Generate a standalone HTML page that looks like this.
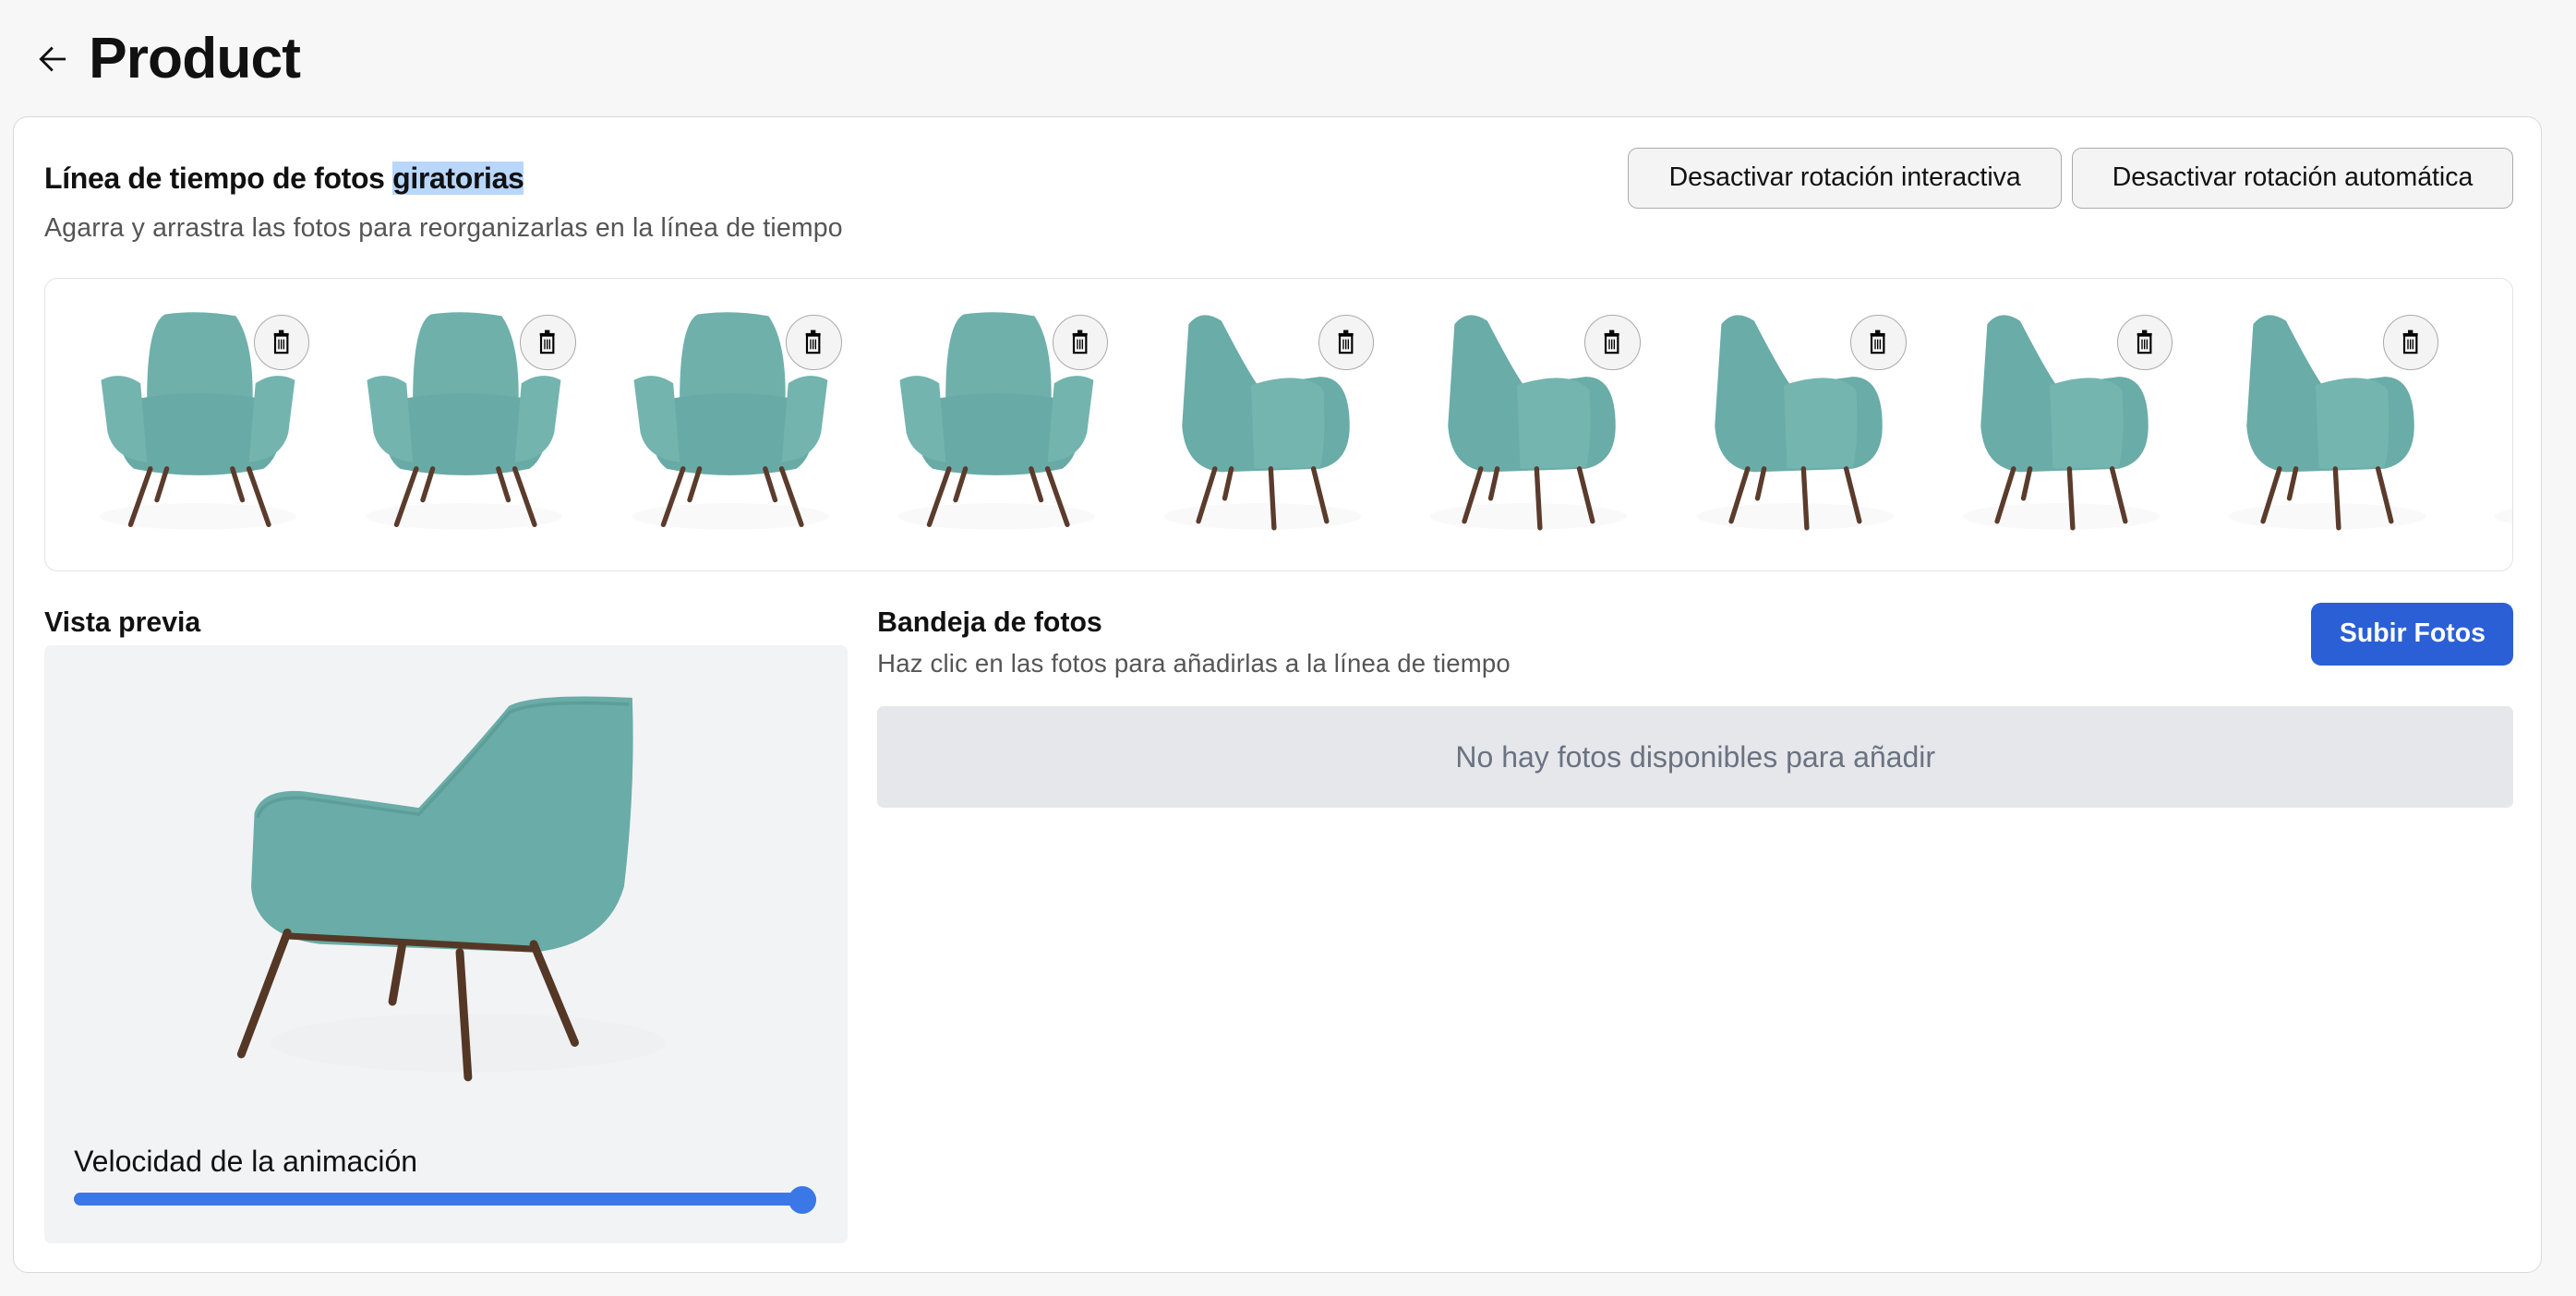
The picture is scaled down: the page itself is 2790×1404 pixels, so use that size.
<!DOCTYPE html>
<html><head><meta charset="utf-8"><style>
html,body{margin:0;padding:0}
body{width:1568px;height:789px;overflow:hidden;background:#f7f7f7;font-family:"Liberation Sans",Arial,sans-serif;color:#111;zoom:1.7793;position:relative}
.abs{position:absolute}
.card{left:8px;top:71px;width:1539px;height:704px;background:#fff;border:1px solid #d9d9d9;border-radius:9px;box-sizing:border-box}
.btn{top:90px;height:37px;background:#f4f4f4;border:1px solid #aaa;border-radius:6px;box-sizing:border-box;font-size:16px;line-height:35px;text-align:center;color:#111}
.tl{left:27px;top:169px;width:1503px;height:179px;border:1px solid #e3e3e3;border-radius:8px;box-sizing:border-box;overflow:hidden;background:#fff}
.del{width:34px;height:34px;border-radius:50%;background:#f4f4f4;border:1px solid #aaa;box-sizing:border-box}
</style></head><body>
<svg width="0" height="0" style="position:absolute">
<defs>
<symbol id="front" viewBox="0 0 130 135">
<ellipse cx="65" cy="125" rx="60" ry="8" fill="#f9f9f9"/>
<path d="M34 62 Q33 8 45 2 Q65 -1 88 3 Q100 20 98 62 Z" fill="#6fb0ab"/>
<path d="M20 55 Q65 45 112 55 Q120 85 105 96 Q65 104 26 96 Q12 85 20 55Z" fill="#68aaa5"/>
<path d="M6 42 Q18 36 30 44 L34 92 Q14 90 10 74 Z" fill="#73b4af"/>
<path d="M124 42 Q112 36 100 44 L96 92 Q116 90 120 74 Z" fill="#73b4af"/>
<g stroke="#5a3b2c" stroke-width="3" stroke-linecap="round"><line x1="36" y1="96" x2="24" y2="130"/><line x1="96" y1="96" x2="108" y2="130"/><line x1="46" y1="96" x2="40" y2="115"/><line x1="86" y1="96" x2="92" y2="115"/></g>
</symbol>
<symbol id="side" viewBox="0 0 130 135">
<ellipse cx="65" cy="125" rx="60" ry="8" fill="#f9f9f9"/>
<path d="M20 8 Q28 -2 40 6 Q55 35 62 45 L100 40 Q118 40 118 70 Q118 92 100 96 L40 98 Q18 96 16 70 Z" fill="#6aaca7"/>
<path d="M58 45 Q90 35 102 48 Q104 80 100 95 L60 96 Z" fill="#74b5b0"/>
<g stroke="#5a3b2c" stroke-width="3" stroke-linecap="round"><line x1="36" y1="96" x2="26" y2="128"/><line x1="96" y1="96" x2="104" y2="128"/><line x1="46" y1="96" x2="42" y2="114"/><line x1="70" y1="96" x2="72" y2="132"/></g>
</symbol>
<symbol id="trash" viewBox="0 0 16 20">
<rect x="6" y="0.5" width="4" height="2.5" fill="#000"/><rect x="2" y="3" width="12" height="2" fill="#000"/>
<path d="M3 5 H13 V19 H3 Z" fill="none" stroke="#000" stroke-width="1.6"/>
<g stroke="#000" stroke-width="1"><line x1="6" y1="8" x2="6" y2="16"/><line x1="8" y1="8" x2="8" y2="16"/><line x1="10" y1="8" x2="10" y2="16"/></g>
</symbol>
</defs></svg>

<svg class="abs" style="left:22px;top:27px" width="20" height="18" viewBox="0 0 20 18"><path d="M18 9 H3 M10 2 L3 9 L10 16" fill="none" stroke="#111" stroke-width="1.6"/></svg>
<div class="abs" style="left:54px;top:16px;font-size:35px;font-weight:bold;letter-spacing:-0.5px">Product</div>

<div class="abs card"></div>
<div class="abs" style="left:27px;top:98px;font-size:18px;font-weight:bold;line-height:22px;letter-spacing:-0.2px">Línea de tiempo de fotos <span style="background:#b9d6fb">giratorias</span></div>
<div class="abs" style="left:27px;top:130px;font-size:16px;color:#555;letter-spacing:0.1px">Agarra y arrastra las fotos para reorganizarlas en la línea de tiempo</div>
<div class="abs btn" style="left:991px;width:264px">Desactivar rotación interactiva</div>
<div class="abs btn" style="left:1261px;width:269px">Desactivar rotación automática</div>

<div class="abs tl">
<svg class="abs" style="left:18px;top:20px" width="150" height="135"><use href="#front"/></svg>
<svg class="abs" style="left:180px;top:20px" width="150" height="135"><use href="#front"/></svg>
<svg class="abs" style="left:342px;top:20px" width="150" height="135"><use href="#front"/></svg>
<svg class="abs" style="left:504px;top:20px" width="150" height="135"><use href="#front"/></svg>
<svg class="abs" style="left:666px;top:20px" width="150" height="135"><use href="#side"/></svg>
<svg class="abs" style="left:828px;top:20px" width="150" height="135"><use href="#side"/></svg>
<svg class="abs" style="left:990px;top:20px" width="150" height="135"><use href="#side"/></svg>
<svg class="abs" style="left:1152px;top:20px" width="150" height="135"><use href="#side"/></svg>
<svg class="abs" style="left:1314px;top:20px" width="150" height="135"><use href="#side"/></svg>
<svg class="abs" style="left:1476px;top:20px" width="150" height="135"><use href="#side"/></svg>
<div class="abs del" style="left:127px;top:22px"><svg style="margin:8px 0 0 10px" width="12" height="16"><use href="#trash"/></svg></div>
<div class="abs del" style="left:289px;top:22px"><svg style="margin:8px 0 0 10px" width="12" height="16"><use href="#trash"/></svg></div>
<div class="abs del" style="left:451px;top:22px"><svg style="margin:8px 0 0 10px" width="12" height="16"><use href="#trash"/></svg></div>
<div class="abs del" style="left:613px;top:22px"><svg style="margin:8px 0 0 10px" width="12" height="16"><use href="#trash"/></svg></div>
<div class="abs del" style="left:775px;top:22px"><svg style="margin:8px 0 0 10px" width="12" height="16"><use href="#trash"/></svg></div>
<div class="abs del" style="left:937px;top:22px"><svg style="margin:8px 0 0 10px" width="12" height="16"><use href="#trash"/></svg></div>
<div class="abs del" style="left:1099px;top:22px"><svg style="margin:8px 0 0 10px" width="12" height="16"><use href="#trash"/></svg></div>
<div class="abs del" style="left:1261px;top:22px"><svg style="margin:8px 0 0 10px" width="12" height="16"><use href="#trash"/></svg></div>
<div class="abs del" style="left:1423px;top:22px"><svg style="margin:8px 0 0 10px" width="12" height="16"><use href="#trash"/></svg></div>
</div>

<div class="abs" style="left:27px;top:370px;font-size:17px;font-weight:bold">Vista previa</div>
<div class="abs" style="left:27px;top:393px;width:489px;height:364px;background:#f2f3f5;border-radius:4px"></div>
<svg class="abs" style="left:135px;top:420px" width="280" height="245" viewBox="0 0 280 245">
<ellipse cx="150" cy="215" rx="120" ry="18" fill="#eef0f2"/>
<path d="M20 75 Q25 60 50 62 L120 72 Q150 40 175 10 Q190 2 250 5 Q252 60 245 120 Q235 155 190 160 L60 155 Q20 150 18 120 Z" fill="#6aaca7"/>
<path d="M22 78 Q25 65 50 66 L120 76 Q150 44 175 14 Q190 6 248 9" fill="none" stroke="#5d9e99" stroke-width="2"/>
<g stroke="#553726" stroke-width="5" stroke-linecap="round"><line x1="40" y1="148" x2="12" y2="222"/><line x1="110" y1="155" x2="104" y2="190"/><line x1="145" y1="160" x2="150" y2="236"/><line x1="190" y1="155" x2="215" y2="215"/><line x1="40" y1="150" x2="190" y2="158" stroke-width="4"/></g>
</svg>
<div class="abs" style="left:45px;top:697px;font-size:18px">Velocidad de la animación</div>
<div class="abs" style="left:45px;top:726px;width:452px;height:8px;background:#3b78e7;border-radius:4px"></div>
<div class="abs" style="left:480px;top:722px;width:17px;height:17px;background:#3b78e7;border-radius:50%"></div>

<div class="abs" style="left:534px;top:370px;font-size:17px;font-weight:bold">Bandeja de fotos</div>
<div class="abs" style="left:534px;top:395px;font-size:15.5px;color:#555;letter-spacing:0.1px">Haz clic en las fotos para añadirlas a la línea de tiempo</div>
<div class="abs" style="left:1407px;top:367px;width:123px;height:38px;background:#2a5fd6;border-radius:6px;color:#fff;font-size:16px;font-weight:bold;line-height:38px;text-align:center">Subir Fotos</div>
<div class="abs" style="left:534px;top:430px;width:996px;height:62px;background:#e5e7eb;border-radius:4px;color:#6b7280;font-size:18px;line-height:62px;text-align:center">No hay fotos disponibles para añadir</div>
</body></html>
